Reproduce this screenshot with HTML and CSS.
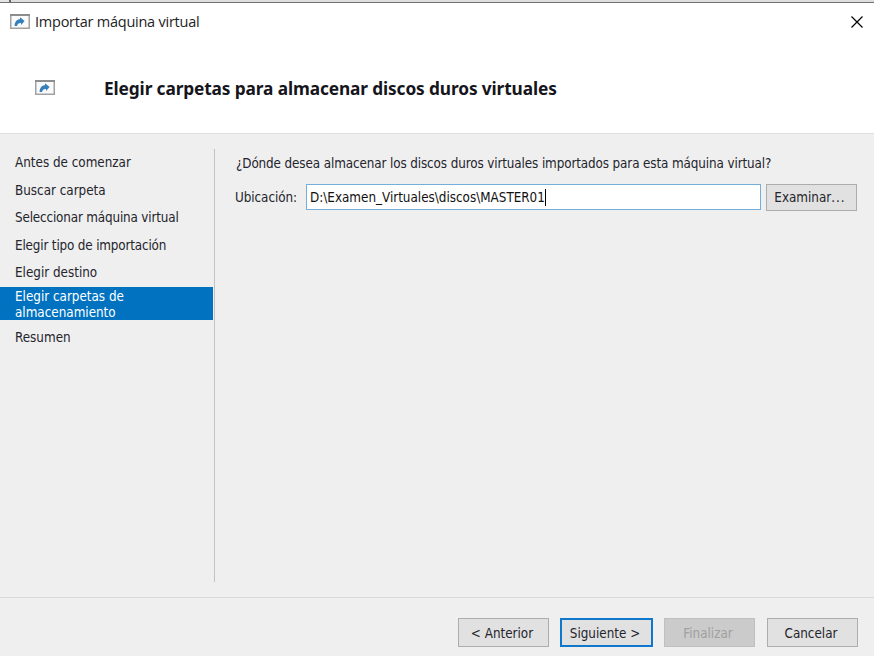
FILE: index.html
```html
<!DOCTYPE html>
<html lang="es">
<head>
<meta charset="utf-8">
<title>Importar máquina virtual</title>
<link rel="stylesheet" href="styles.css">
</head>
<body>
<svg class="symbols" width="0" height="0" aria-hidden="true">
  <symbol id="import" viewBox="0 0 20 15">
    <rect x="0.75" y="0.75" width="18.5" height="13.5" fill="#fafafa" stroke="#a2a2a2" stroke-width="1.5"/>
    <path d="M0 1h20" stroke="#8d8d8d" stroke-width="2"/>
    <path d="M4.6 12C4.6 7.6 7 5.2 10 5.2V3.2L14.6 7.1L11 11V9C8.8 8.8 7.5 9.8 7 12Z" fill="#3480bd"/>
  </symbol>
</svg>
<div class="window">
  <div class="backdrop"></div>
  <div class="titlebar">
    <svg class="icon"><use href="#import"/></svg>
    <span class="title">Importar máquina virtual</span>
    <svg class="close" viewBox="0 0 12 12"><path d="M0.5 0.5l11 11M11.5 0.5l-11 11" stroke="#000" stroke-width="1.2"/></svg>
  </div>
  <header class="header">
    <svg class="icon"><use href="#import"/></svg>
    <h1>Elegir carpetas para almacenar discos duros virtuales</h1>
  </header>
  <main class="body">
    <nav class="steps">
      <div class="step">Antes de comenzar</div>
      <div class="step">Buscar carpeta</div>
      <div class="step tight">Seleccionar máquina virtual</div>
      <div class="step tight">Elegir tipo de importación</div>
      <div class="step">Elegir destino</div>
      <div class="step active">Elegir carpetas de<br>almacenamiento</div>
      <div class="step last">Resumen</div>
    </nav>
    <section class="content">
      <p class="question">¿Dónde desea almacenar los discos duros virtuales importados para esta máquina virtual?</p>
      <div class="row">
        <span class="label">Ubicación:</span>
        <div class="field"><span class="path">D:\Examen_Virtuales\discos\MASTER01</span><i class="caret"></i></div>
        <div class="btn browse"><span>Examinar<span class="dots">...</span></span></div>
      </div>
    </section>
  </main>
  <footer class="footer">
    <div class="btn">&lt; Anterior</div>
    <div class="btn primary">Siguiente &gt;</div>
    <div class="btn disabled">Finalizar</div>
    <div class="btn cancel">Cancelar</div>
  </footer>
</div>
</body>
</html>
```
FILE: styles.css
```css
* { box-sizing: border-box; }
body {
  margin: 0;
  font: 13.33px/16px "DejaVu Sans Condensed", "DejaVu Sans", sans-serif;
  font-stretch: condensed;
  color: #24242c;
  overflow: hidden;
}
.symbols { position: absolute; }
.window {
  width: 874px;
  height: 656px;
  display: flex;
  flex-direction: column;
  background: #efefef;
}
.backdrop {
  height: 3px;
  border-bottom: 1px solid #727272;
  background: linear-gradient(90deg, #e4e4e4 9px, #666 9px, #666 11px, #dedede 11px);
}
.titlebar {
  height: 38px;
  padding: 0 11px 0 10px;
  display: flex;
  align-items: center;
  background: #fff;
}
.icon { width: 20px; height: 15px; flex: none; }
.titlebar .icon { margin-top: -2px; }
.title {
  margin-left: 5px;
  font: 14.5px/20px "Open Sans", sans-serif;
  letter-spacing: -0.24px;
  color: #222;
  white-space: nowrap;
}
.close { width: 12px; height: 12px; margin-left: auto; }
.header {
  height: 93px;
  padding: 0 0 0 35px;
  display: flex;
  align-items: center;
  background: #fff;
  border-bottom: 1px solid #dfdfdf;
}
h1 {
  margin: 3px 0 0 49px;
  font: bold 17.3px/22px "Noto Sans", sans-serif;
  letter-spacing: -0.12px;
  color: #15151c;
  white-space: nowrap;
}
.body { height: 463px; display: flex; padding-top: 15px; }
.steps {
  width: 215px;
  height: 433px;
  flex: none;
  border-right: 1px solid #c2c2c2;
  padding-right: 1px;
}
.step {
  height: 27.5px;
  padding-left: 15px;
  line-height: 27px;
  white-space: nowrap;
}
.step.tight { letter-spacing: -0.16px; }
.step.active {
  height: 33px;
  padding-top: 2px;
  line-height: 16px;
  color: #fff;
  background: #0072c0;
}
.step.last { margin-top: 4px; }
.content { flex: none; width: 659px; padding: 7px 17px 0 20px; }
.question { margin: 0 0 0 1px; line-height: 16px; letter-spacing: -0.11px; white-space: nowrap; }
.row { display: flex; align-items: flex-start; margin-top: 12px; }
.label { width: 71px; flex: none; line-height: 28px; letter-spacing: -0.05px; }
.field {
  width: 455px;
  height: 26px;
  flex: none;
  padding: 1px 0 0 3px;
  display: flex;
  align-items: center;
  background: #fff;
  border: 1px solid #74afdc;
  color: #111;
}
.caret { width: 1px; height: 17px; background: #000; }
.btn {
  width: 91px;
  height: 29px;
  flex: none;
  display: flex;
  align-items: center;
  justify-content: center;
  background: #e1e1e1;
  border: 1px solid #adadad;
  white-space: nowrap;
}
.browse { height: 27px; margin: 0 0 0 5px; padding: 1px 3px 0 0; }
.dots { letter-spacing: 1px; }
.footer {
  flex: 1;
  display: flex;
  justify-content: flex-end;
  gap: 11px;
  padding: 20px 16px 0 0;
  border-top: 1px solid #dadada;
}
.footer .btn { padding: 2px 3px 0 0; }
.primary { width: 93px; border: 2px solid #0f77cc; }
.disabled { background: #cbcbcb; border-color: #bfbfbf; color: #a0a0a0; }
.cancel { margin-left: 1px; }
```
